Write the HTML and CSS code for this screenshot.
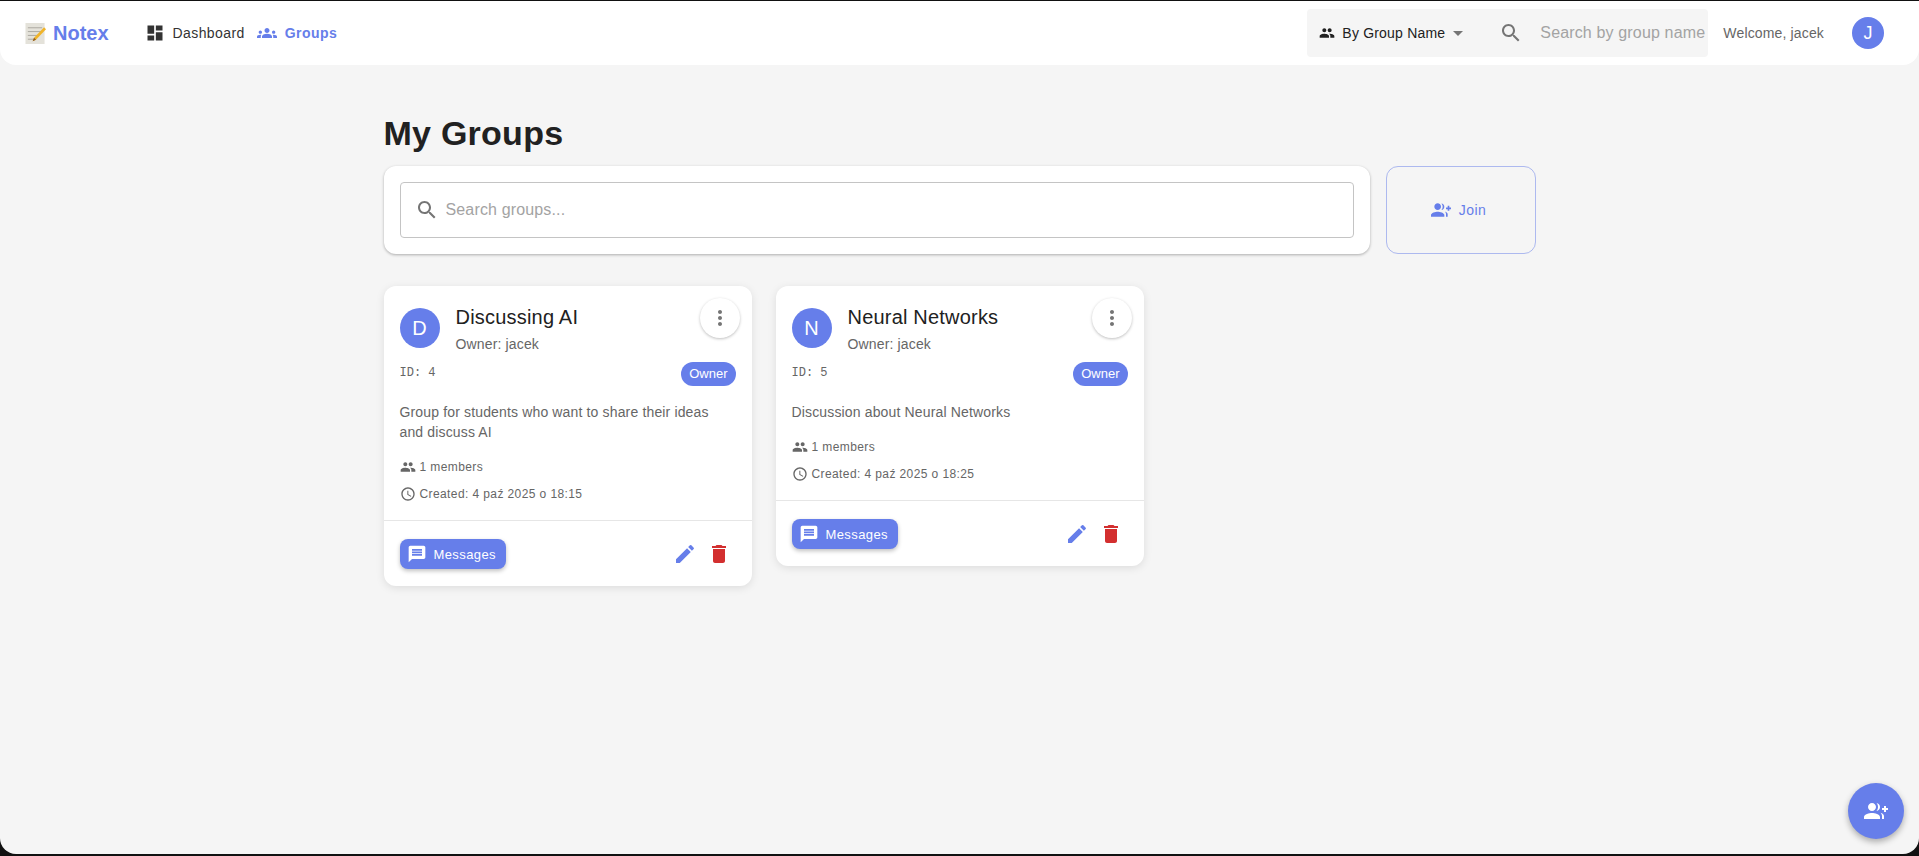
FILE: index.html
```html
<!DOCTYPE html>
<html lang="en">
<head>
  <meta charset="UTF-8">
  <title>Notex - My Groups</title>
  <link rel="stylesheet" href="styles.css">
</head>
<body>
  <svg class="sprite" xmlns="http://www.w3.org/2000/svg">
    <symbol id="i-dashboard" viewBox="0 0 24 24"><path d="M3 13h8V3H3v10zm0 8h8v-6H3v6zm10 0h8V11h-8v10zm0-18v6h8V3h-8z"/></symbol>
    <symbol id="i-groups" viewBox="0 0 24 24"><path d="M12 12.75c1.63 0 3.07.39 4.24.9 1.08.48 1.76 1.56 1.76 2.73V18H6v-1.61c0-1.18.68-2.26 1.76-2.73 1.17-.52 2.61-.91 4.24-.91zM4 13c1.1 0 2-.9 2-2s-.9-2-2-2-2 .9-2 2 .9 2 2 2zm1.13 1.1c-.37-.06-.74-.1-1.13-.1-.99 0-1.93.21-2.78.58C.48 14.9 0 15.62 0 16.43V18h4.5v-1.61c0-.83.23-1.61.63-2.29zM20 13c1.1 0 2-.9 2-2s-.9-2-2-2-2 .9-2 2 .9 2 2 2zm4 3.43c0-.81-.48-1.53-1.22-1.85-.85-.37-1.79-.58-2.78-.58-.39 0-.76.04-1.13.1.4.68.63 1.46.63 2.29V18H24v-1.57zM12 6c1.66 0 3 1.34 3 3s-1.34 3-3 3-3-1.34-3-3 1.34-3 3-3z"/></symbol>
    <symbol id="i-people" viewBox="0 0 24 24"><path d="M16 11c1.66 0 2.99-1.34 2.99-3S17.66 5 16 5c-1.66 0-3 1.34-3 3s1.34 3 3 3zm-8 0c1.66 0 2.99-1.34 2.99-3S9.66 5 8 5C6.34 5 5 6.34 5 8s1.34 3 3 3zm0 2c-2.33 0-7 1.17-7 3.5V19h14v-2.5c0-2.33-4.67-3.5-7-3.5zm8 0c-.29 0-.62.02-.97.05 1.16.84 1.97 1.97 1.97 3.45V19h6v-2.5c0-2.33-4.67-3.5-7-3.5z"/></symbol>
    <symbol id="i-search" viewBox="0 0 24 24"><path d="M15.5 14h-.79l-.28-.27C15.41 12.59 16 11.11 16 9.5 16 5.91 13.09 3 9.5 3S3 5.91 3 9.5 5.91 16 9.5 16c1.61 0 3.09-.59 4.23-1.57l.27.28v.79l5 4.99L20.49 19l-4.99-5zm-6 0C7.01 14 5 11.99 5 9.5S7.01 5 9.5 5 14 7.01 14 9.5 11.99 14 9.5 14z"/></symbol>
    <symbol id="i-group-add" viewBox="0 0 24 24"><path d="M22 9V7h-2v2h-2v2h2v2h2v-2h2V9h-2zM8 12c2.21 0 4-1.79 4-4s-1.79-4-4-4-4 1.79-4 4 1.79 4 4 4zm0 2c-2.67 0-8 1.34-8 4v2h16v-2c0-2.66-5.33-4-8-4zm4.51-9.95C13.43 5.11 14 6.49 14 8s-.57 2.89-1.49 3.95C14.47 11.7 16 10.04 16 8s-1.53-3.7-3.49-3.95zm4.02 9.78C17.42 14.66 18 15.7 18 17v3h2v-3c0-1.45-1.59-2.51-3.47-3.17z"/></symbol>
    <symbol id="i-more" viewBox="0 0 24 24"><path d="M12 8c1.1 0 2-.9 2-2s-.9-2-2-2-2 .9-2 2 .9 2 2 2zm0 2c-1.1 0-2 .9-2 2s.9 2 2 2 2-.9 2-2-.9-2-2-2zm0 6c-1.1 0-2 .9-2 2s.9 2 2 2 2-.9 2-2-.9-2-2-2z"/></symbol>
    <symbol id="i-clock" viewBox="0 0 24 24"><path d="M11.99 2C6.47 2 2 6.48 2 12s4.47 10 9.99 10C17.52 22 22 17.52 22 12S17.52 2 11.99 2zM12 20c-4.42 0-8-3.58-8-8s3.58-8 8-8 8 3.58 8 8-3.58 8-8 8zm.5-13H11v6l5.25 3.15.75-1.23-4.5-2.67z"/></symbol>
    <symbol id="i-message" viewBox="0 0 24 24"><path d="M20 2H4c-1.1 0-1.99.9-1.99 2L2 22l4-4h14c1.1 0 2-.9 2-2V4c0-1.1-.9-2-2-2zm-2 12H6v-2h12v2zm0-3H6V9h12v2zm0-3H6V6h12v2z"/></symbol>
    <symbol id="i-edit" viewBox="0 0 24 24"><path d="M3 17.25V21h3.75L17.81 9.94l-3.75-3.75L3 17.25zM20.71 7.04c.39-.39.39-1.02 0-1.41l-2.34-2.34a.9959.9959 0 0 0-1.41 0l-1.83 1.83 3.75 3.75 1.83-1.83z"/></symbol>
    <symbol id="i-delete" viewBox="0 0 24 24"><path d="M6 19c0 1.1.9 2 2 2h8c1.1 0 2-.9 2-2V7H6v12zM19 4h-3.5l-1-1h-5l-1 1H5v2h14V4z"/></symbol>
  </svg>

  <div class="window">
    <header class="navbar">
      <a class="brand" href="#">
        <svg class="brand-icon" viewBox="0 0 22 24">
          <rect x="0.5" y="1" width="20" height="22" fill="#e4e2da"/>
          <path d="M3 6h15M3 10h15M3 14h11M3 18h8" stroke="#a9a79e" stroke-width="1"/>
          <path d="M20 5.500l2 2-10.500 11-3.500 1.500 1.500-3.500z" fill="#f0b429"/>
          <path d="M8 20l1.500-3.500 2 2z" fill="#8a5a2b"/>
        </svg>
        <span>Notex</span>
      </a>
      <nav class="nav-links">
        <a class="nav-link" href="#"><svg class="icon-20"><use href="#i-dashboard"/></svg>Dashboard</a>
        <a class="nav-link active" href="#"><svg class="icon-20"><use href="#i-groups"/></svg>Groups</a>
      </nav>
      <div class="nav-right">
        <div class="global-search">
          <div class="search-type">
            <svg class="icon-16"><use href="#i-people"/></svg>
            <span>By Group Name</span>
            <svg class="icon-24 arrow" viewBox="0 0 24 24"><path d="M7 10l5 5 5-5z"/></svg>
          </div>
          <svg class="icon-24 search-icon"><use href="#i-search"/></svg>
          <input class="global-input" type="text" placeholder="Search by group name">
        </div>
        <span class="welcome">Welcome, jacek</span>
        <div class="avatar avatar-small">J</div>
      </div>
    </header>

    <main class="content">
      <h1>My Groups</h1>
      <div class="toolbar">
        <div class="search-card">
          <div class="search-field">
            <svg class="icon-24"><use href="#i-search"/></svg>
            <input type="text" placeholder="Search groups...">
          </div>
        </div>
        <button class="join-btn"><svg class="icon-20"><use href="#i-group-add"/></svg>Join</button>
      </div>

      <div class="groups">
        <article class="card">
          <div class="card-body">
            <div class="card-head">
              <div class="avatar">D</div>
              <div class="card-title">
                <h2>Discussing AI</h2>
                <p>Owner: jacek</p>
              </div>
              <button class="more-btn"><svg class="icon-24"><use href="#i-more"/></svg></button>
            </div>
            <div class="card-meta">
              <code>ID: 4</code>
              <span class="chip">Owner</span>
            </div>
            <p class="desc">Group for students who want to share their ideas and discuss AI</p>
            <div class="info"><svg class="icon-16"><use href="#i-people"/></svg>1 members</div>
            <div class="info"><svg class="icon-16"><use href="#i-clock"/></svg>Created: 4 paź 2025 o 18:15</div>
          </div>
          <div class="card-foot">
            <button class="msg-btn"><svg class="icon-20"><use href="#i-message"/></svg>Messages</button>
            <div class="actions">
              <svg class="icon-24 edit"><use href="#i-edit"/></svg>
              <svg class="icon-24 del"><use href="#i-delete"/></svg>
            </div>
          </div>
        </article>

        <article class="card">
          <div class="card-body">
            <div class="card-head">
              <div class="avatar">N</div>
              <div class="card-title">
                <h2>Neural Networks</h2>
                <p>Owner: jacek</p>
              </div>
              <button class="more-btn"><svg class="icon-24"><use href="#i-more"/></svg></button>
            </div>
            <div class="card-meta">
              <code>ID: 5</code>
              <span class="chip">Owner</span>
            </div>
            <p class="desc">Discussion about Neural Networks</p>
            <div class="info"><svg class="icon-16"><use href="#i-people"/></svg>1 members</div>
            <div class="info"><svg class="icon-16"><use href="#i-clock"/></svg>Created: 4 paź 2025 o 18:25</div>
          </div>
          <div class="card-foot">
            <button class="msg-btn"><svg class="icon-20"><use href="#i-message"/></svg>Messages</button>
            <div class="actions">
              <svg class="icon-24 edit"><use href="#i-edit"/></svg>
              <svg class="icon-24 del"><use href="#i-delete"/></svg>
            </div>
          </div>
        </article>
      </div>
    </main>

    <button class="fab"><svg class="icon-24"><use href="#i-group-add"/></svg></button>
  </div>
</body>
</html>
```

FILE: styles.css
```css
* {
  box-sizing: border-box;
}
body {
  margin: 0;
  height: 856px;
  overflow: hidden;
  padding: 1px 0 2px;
  background-color: #111;
  font-family: "Liberation Sans", Arial, sans-serif;
  color: #212121;
}
.sprite {
  display: none;
}
svg {
  fill: currentColor;
  flex-shrink: 0;
}
.icon-16 { width: 16px; height: 16px; }
.icon-20 { width: 20px; height: 20px; }
.icon-24 { width: 24px; height: 24px; }

.window {
  position: relative;
  height: 100%;
  background-color: #f5f5f5;
  border-radius: 0 0 16px 16px;
  overflow: hidden;
}

/* navbar */
.navbar {
  display: flex;
  align-items: center;
  height: 64px;
  padding: 0 35px 0 25px;
  background-color: #fff;
  border-radius: 0 0 16px 16px;
}
.brand {
  display: flex;
  align-items: center;
  gap: 7px;
  font-size: 20px;
  font-weight: 700;
  color: #667eea;
  text-decoration: none;
}
.brand-icon {
  width: 21px;
  height: 23px;
}
.nav-links {
  display: flex;
  margin-left: 36px;
  gap: 12px;
}
.nav-link {
  display: flex;
  align-items: center;
  gap: 8px;
  font-size: 14px;
  letter-spacing: 0.4px;
  color: #333;
  text-decoration: none;
}
.nav-link.active {
  color: #667eea;
  font-weight: 700;
  letter-spacing: 0.45px;
}
.nav-right {
  display: flex;
  align-items: center;
  margin-left: auto;
}
.global-search {
  display: flex;
  align-items: center;
  width: 401px;
  height: 48px;
  background-color: #f5f5f5;
  border-radius: 4px;
  overflow: hidden;
}
.search-type {
  display: flex;
  align-items: center;
  padding-left: 12px;
  font-size: 14px;
  letter-spacing: 0.2px;
  color: #212121;
}
.search-type span {
  margin-left: 7px;
}
.search-type .arrow {
  margin-left: 1px;
  fill: #757575;
}
.global-search .search-icon {
  margin-left: 29px;
  fill: #757575;
}
.global-input {
  flex: 1;
  min-width: 0;
  margin-left: 17px;
  border: none;
  outline: none;
  padding: 0;
  background: transparent;
  font: 16px "Liberation Sans", Arial, sans-serif;
  letter-spacing: 0.15px;
}
input::placeholder {
  color: #a3a3a3;
  opacity: 1;
}
.welcome {
  margin-left: 15px;
  font-size: 14px;
  letter-spacing: 0.15px;
  color: #666;
}
.avatar {
  display: flex;
  align-items: center;
  justify-content: center;
  width: 40px;
  height: 40px;
  border-radius: 50%;
  background-color: #667eea;
  color: #fff;
  font-size: 20px;
  flex-shrink: 0;
}
.avatar-small {
  width: 32px;
  height: 32px;
  margin-left: 28px;
  font-size: 18px;
}

/* page */
.content {
  width: 1200px;
  margin: 0 auto;
  padding: 0 24px;
}
h1 {
  margin: 48px 0 12px;
  font-size: 34px;
  line-height: 41px;
  font-weight: 700;
  letter-spacing: 0.25px;
  color: #212121;
}
.toolbar {
  display: flex;
  gap: 16px;
}
.search-card {
  flex: 1;
  padding: 16px;
  background-color: #fff;
  border-radius: 12px;
  box-shadow: 0 1px 3px rgba(0, 0, 0, 0.3);
}
.search-field {
  display: flex;
  align-items: center;
  gap: 7px;
  height: 56px;
  padding: 0 14px;
  border: 1px solid #c4c4c4;
  border-radius: 4px;
  color: #757575;
}
.search-field input {
  flex: 1;
  border: none;
  outline: none;
  padding: 0;
  font: 16px "Liberation Sans", Arial, sans-serif;
  letter-spacing: 0.15px;
}
.join-btn {
  display: flex;
  align-items: center;
  justify-content: center;
  gap: 8px;
  width: 150px;
  padding: 0 4px 0 0;
  border: 1px solid rgba(102, 126, 234, 0.5);
  border-radius: 12px;
  background: transparent;
  color: #667eea;
  font: 14px "Liberation Sans", Arial, sans-serif;
  letter-spacing: 0.4px;
}

/* cards */
.groups {
  display: grid;
  grid-template-columns: repeat(3, 1fr);
  gap: 24px;
  align-items: start;
  margin-top: 32px;
}
.card {
  background-color: #fff;
  border-radius: 12px;
  box-shadow: 0 2px 8px rgba(0, 0, 0, 0.1);
}
.card-body {
  padding: 12px 16px 0;
}
.card-head {
  display: flex;
  align-items: flex-start;
}
.card-head .avatar {
  margin-top: 10px;
}
.card-title {
  flex: 1;
  margin-left: 16px;
  padding-top: 5px;
}
.card-title h2 {
  margin: 0;
  font-size: 20px;
  line-height: 28px;
  font-weight: 400;
  letter-spacing: 0.2px;
}
.card-title p {
  margin: 3px 0 0;
  font-size: 14px;
  line-height: 20px;
  letter-spacing: 0.15px;
  color: #666;
}
.more-btn {
  display: flex;
  align-items: center;
  justify-content: center;
  width: 40px;
  height: 40px;
  margin-right: -4px;
  padding: 0;
  border: none;
  border-radius: 50%;
  background-color: #fff;
  color: #757575;
  box-shadow: 0 1px 3px rgba(0, 0, 0, 0.25);
}
.card-meta {
  display: flex;
  align-items: center;
  justify-content: space-between;
  height: 24px;
  margin-top: 8px;
}
.card-meta code {
  margin-bottom: 3px;
  font-family: "Liberation Mono", monospace;
  font-size: 12px;
  color: #666;
}
.chip {
  padding: 0 8px;
  font-size: 13px;
  line-height: 24px;
  color: #fff;
  background-color: #667eea;
  border-radius: 12px;
}
.desc {
  margin: 16px 0 16px;
  font-size: 14px;
  line-height: 20px;
  letter-spacing: 0.15px;
  color: #666;
}
.info {
  display: flex;
  align-items: center;
  gap: 4px;
  height: 18px;
  margin-bottom: 9px;
  font-size: 12px;
  letter-spacing: 0.4px;
  color: #666;
}
.card-foot {
  display: flex;
  align-items: center;
  justify-content: space-between;
  padding: 18px 16px 17px;
  margin-top: 17px;
  border-top: 1px solid #e6e6e6;
}
.msg-btn {
  display: flex;
  align-items: center;
  gap: 7px;
  height: 30px;
  padding: 0 10px 0 7px;
  border: none;
  border-radius: 8px;
  background-color: #667eea;
  color: #fff;
  font: 13px "Liberation Sans", Arial, sans-serif;
  letter-spacing: 0.4px;
  box-shadow: 0 2px 4px rgba(0, 0, 0, 0.25);
}
.actions {
  display: flex;
  gap: 10px;
  margin-right: 5px;
}
.edit { color: #667eea; }
.del { color: #d32f2f; }

.fab {
  position: absolute;
  right: 15px;
  bottom: 15px;
  display: flex;
  align-items: center;
  justify-content: center;
  width: 56px;
  height: 56px;
  padding: 0;
  border: none;
  border-radius: 50%;
  background-color: #667eea;
  color: #fff;
  box-shadow: 0 3px 6px rgba(0, 0, 0, 0.3);
}
```
